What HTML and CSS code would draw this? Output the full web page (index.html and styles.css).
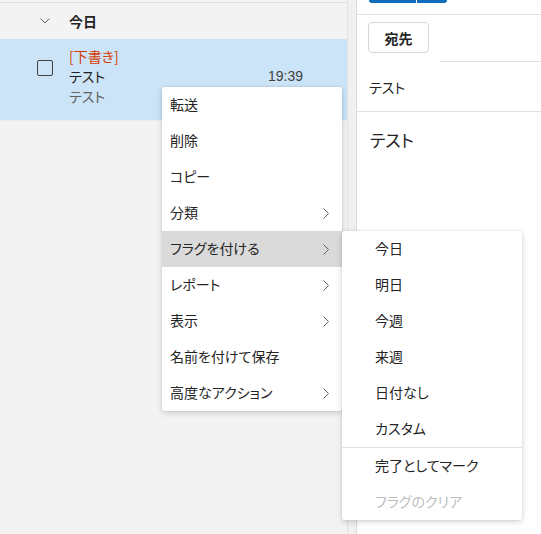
FILE: index.html
```html
<!DOCTYPE html>
<html lang="ja">
<head>
<meta charset="utf-8">
<link rel="stylesheet" href="styles.css">
</head>
<body>
<div class="app">
  <div class="list">
    <div class="top-strip"></div>
    <div class="group-header">
      <svg class="caret" width="10" height="6" viewBox="0 0 10 6"><polyline points="0.5,0.5 5,5 9.5,0.5" fill="none" stroke="#616161" stroke-width="1"/></svg>
      <span class="group-title">今日</span>
    </div>
    <div class="mail-row">
      <div class="check"></div>
      <div class="mail-text">
        <div class="draft">[下書き]</div>
        <div class="line2"><span class="sender">テスト</span><span class="time">19:39</span></div>
        <div class="subject">テスト</div>
      </div>
    </div>
    <div class="row-sep"></div>
  </div>
  <div class="divider"></div>
  <div class="reading">
    <div class="toolbar">
      <div class="send-group"><span class="send-a"></span><span class="send-b"></span></div>
    </div>
    <div class="to-row"><button class="to-btn">宛先</button><div class="to-line"></div></div>
    <div class="subject-field">テスト</div>
    <div class="body-text">テスト</div>
  </div>
</div>

<div class="menu main-menu">
  <div class="item">転送</div>
  <div class="item">削除</div>
  <div class="item">コピー</div>
  <div class="item">分類<svg class="chev" width="6" height="11" viewBox="0 0 6 11"><polyline points="0.5,0.5 5.5,5.5 0.5,10.5" fill="none" stroke="#616161" stroke-width="1"/></svg></div>
  <div class="item active">フラグを付ける<svg class="chev" width="6" height="11" viewBox="0 0 6 11"><polyline points="0.5,0.5 5.5,5.5 0.5,10.5" fill="none" stroke="#616161" stroke-width="1"/></svg></div>
  <div class="item">レポート<svg class="chev" width="6" height="11" viewBox="0 0 6 11"><polyline points="0.5,0.5 5.5,5.5 0.5,10.5" fill="none" stroke="#616161" stroke-width="1"/></svg></div>
  <div class="item">表示<svg class="chev" width="6" height="11" viewBox="0 0 6 11"><polyline points="0.5,0.5 5.5,5.5 0.5,10.5" fill="none" stroke="#616161" stroke-width="1"/></svg></div>
  <div class="item">名前を付けて保存</div>
  <div class="item">高度なアクション<svg class="chev" width="6" height="11" viewBox="0 0 6 11"><polyline points="0.5,0.5 5.5,5.5 0.5,10.5" fill="none" stroke="#616161" stroke-width="1"/></svg></div>
</div>

<div class="menu sub-menu">
  <div class="item sub">今日</div>
  <div class="item sub">明日</div>
  <div class="item sub">今週</div>
  <div class="item sub">来週</div>
  <div class="item sub">日付なし</div>
  <div class="item sub">カスタム</div>
  <div class="menu-sep"></div>
  <div class="item sub">完了としてマーク</div>
  <div class="item sub disabled">フラグのクリア</div>
</div>
</body>
</html>
```
FILE: styles.css
```css
html, body {
  margin: 0;
  padding: 0;
  width: 541px;
  height: 534px;
  overflow: hidden;
  font-family: "Noto Sans CJK JP", "Noto Sans", sans-serif;
  font-feature-settings: "palt";
  color: #242424;
  background: #ffffff;
}

.app {
  display: flex;
  height: 534px;
}

.list {
  width: 347px;
  flex: none;
  background: #f3f3f3;
  display: flex;
  flex-direction: column;
}

.top-strip {
  height: 2px;
  border-bottom: 1px solid #e1e1e1;
}

.group-header {
  height: 36px;
  display: flex;
  align-items: center;
  padding-left: 40px;
  box-sizing: border-box;
}

.caret {
  margin-right: 19px;
}

.group-title {
  font-size: 14px;
  font-weight: 700;
  line-height: 20px;
}

.mail-row {
  height: 81px;
  background: #cce4f7;
  display: flex;
  box-sizing: border-box;
  padding-top: 7px;
}

.check {
  width: 14px;
  height: 14px;
  border: 1px solid #424242;
  border-radius: 2px;
  margin: 14px 16px 0 37px;
  flex: none;
}

.mail-text {
  flex: 1;
  font-size: 14px;
  line-height: 20px;
  padding-right: 44px;
}

.draft {
  color: #d83b01;
}

.line2 {
  display: flex;
  justify-content: space-between;
}

.sender {
  color: #1f1f1f;
  font-weight: 400;
}

.time {
  font-family: "Liberation Sans", "Noto Sans", sans-serif;
  font-size: 14px;
  color: #424242;
}

.subject {
  color: #616161;
}

.row-sep {
  height: 1px;
  background: #ebebeb;
}

.divider {
  width: 8px;
  flex: none;
  background: #f0f0f0;
  border-left: 1px solid #e3e3e3;
  border-right: 1px solid #dcdcdc;
}

.reading {
  flex: 1;
  background: #ffffff;
  display: flex;
  flex-direction: column;
}

.toolbar {
  height: 14px;
  border-bottom: 1px solid #e0e0e0;
  padding-left: 12px;
}

.send-group {
  display: flex;
  height: 3px;
}

.send-a {
  width: 47px;
  background: #0f6cbd;
  border-radius: 0 0 0 4px;
  margin-right: 1px;
}

.send-b {
  width: 30px;
  background: #0f6cbd;
  border-radius: 0 0 4px 0;
}

.to-row {
  display: flex;
  align-items: flex-end;
  height: 47px;
  padding-left: 11px;
  padding-top: 7px;
  box-sizing: border-box;
}

.to-btn {
  width: 61px;
  height: 31px;
  align-self: flex-start;
  background: #ffffff;
  border: 1px solid #d6d6d6;
  border-radius: 4px;
  font-family: inherit;
  font-feature-settings: "palt";
  font-size: 14px;
  font-weight: 700;
  color: #242424;
  padding: 0;
  line-height: 20px;
}

.to-line {
  flex: 1;
  margin-left: 11px;
  height: 1px;
  background: #e0e0e0;
}

.subject-field {
  height: 50px;
  border-bottom: 1px solid #e0e0e0;
  box-sizing: border-box;
  padding-left: 12px;
  font-size: 14px;
  line-height: 50px;
  color: #242424;
}

.body-text {
  padding: 16px 0 0 13px;
  font-size: 17px;
  line-height: 24px;
  color: #242424;
}

.menu {
  position: absolute;
  background: #ffffff;
  box-shadow: 0 2px 6px rgba(0, 0, 0, 0.16), 0 0 2px rgba(0, 0, 0, 0.12);
  border-radius: 2px;
}

.main-menu {
  left: 162px;
  top: 87px;
  width: 180px;
}

.sub-menu {
  left: 342px;
  top: 231px;
  width: 180px;
}

.item {
  height: 36px;
  box-sizing: border-box;
  display: flex;
  align-items: center;
  justify-content: space-between;
  padding: 0 13px 2px 8px;
  font-size: 14px;
  line-height: 20px;
  color: #242424;
}

.item .chev {
  margin-top: 2px;
}

.item.active {
  background: #dadada;
}

.item.sub {
  padding-left: 33px;
}

.item.disabled {
  color: #bdbdbd;
}

.menu-sep {
  height: 1px;
  background: #e0e0e0;
}
```
